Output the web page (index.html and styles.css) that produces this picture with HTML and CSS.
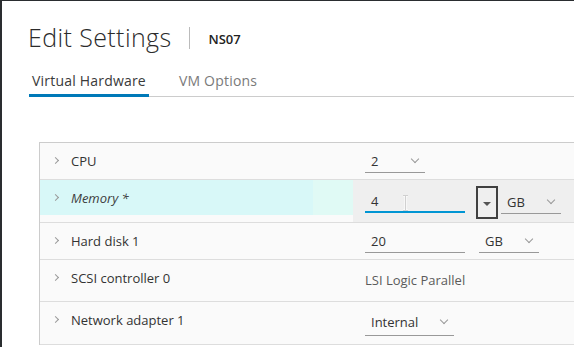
FILE: index.html
```html
<!DOCTYPE html>
<html lang="en">
  <head>
    <meta charset="UTF-8" />
    <meta name="viewport" content="width=device-width, initial-scale=1.0" />
    <title>Edit Settings</title>
    <link rel="stylesheet" href="styles.css">
  </head>
  <body>
    <div class="dialog">
      <div class="header">
        <h1 class="title">Edit Settings</h1>
        <div class="divider"></div>
        <div class="vm-name">NS07</div>
      </div>

      <div class="tabs">
        <div class="tab active">Virtual Hardware</div>
        <div class="tab">VM Options</div>
      </div>

      <div class="hardware">
        <div class="row short">
          <div class="label"><span class="caret"></span>CPU</div>
          <div class="value">
            <div class="select w60"><span>2</span><span class="chev"></span></div>
          </div>
        </div>

        <div class="row taller selected">
          <div class="label"><span class="caret"></span><em>Memory *</em></div>
          <div class="value">
            <div class="input focus w100">4</div>
            <div class="spin"><span class="tri"></span></div>
            <div class="select w60 unit"><span>GB</span><span class="chev"></span></div>
            <svg class="ibeam" width="7" height="16" viewBox="0 0 7 16">
              <path d="M1 0.5h5M3.5 0.5v15M1 15.5h5" stroke="#fff" stroke-width="2" fill="none" />
              <path d="M1 0.5h5M3.5 0.5v15M1 15.5h5" stroke="#d0d0d0" stroke-width="1" fill="none" />
            </svg>
          </div>
        </div>

        <div class="row short">
          <div class="label"><span class="caret"></span>Hard disk 1</div>
          <div class="value">
            <div class="input w100">20</div>
            <div class="select w60 unit-gap"><span>GB</span><span class="chev"></span></div>
          </div>
        </div>

        <div class="row tall">
          <div class="label"><span class="caret"></span>SCSI controller 0</div>
          <div class="value">
            <div class="plain">LSI Logic Parallel</div>
          </div>
        </div>

        <div class="row taller">
          <div class="label"><span class="caret"></span>Network adapter 1</div>
          <div class="value">
            <div class="select w89 low"><span>Internal</span><span class="chev"></span></div>
          </div>
        </div>
      </div>
    </div>
  </body>
</html>
```

FILE: styles.css
```css
body {
  margin: 0;
  background-color: #2a2d30;
  font-family: "Open Sans", sans-serif;
  color: #313131;
  overflow: hidden;
}
.dialog {
  margin: 1px 0 0 2px;
  height: 346px;
  background-color: #fff;
  overflow: hidden;
}

/* Header */
.header {
  display: flex;
  align-items: center;
  padding: 20px 0 0 26px;
  height: 32px;
}
.title {
  margin: 0;
  font-size: 25px;
  font-weight: 300;
  letter-spacing: 0.4px;
  color: #2b2b2b;
}
.divider {
  width: 1px;
  height: 22px;
  margin: 2px 19px 0 17px;
  background-color: #bbb;
}
.vm-name {
  font-size: 13px;
  font-weight: 600;
  margin-top: 3px;
  color: #222;
}

/* Tabs */
.tabs {
  display: flex;
  gap: 27px;
  margin: 18px 0 0 27px;
  border-bottom: 1px solid #ccc;
}
.tab {
  font-size: 14px;
  letter-spacing: 0.2px;
  padding: 0 3px 4px 3px;
  color: #7a7a7a;
  border-bottom: 3px solid transparent;
  margin-bottom: -1px;
}
.tab.active {
  color: #3a3a3a;
  border-bottom-color: #0079b8;
}

/* Hardware rows */
.hardware {
  margin: 45px 0 0 37px;
  border-top: 1px solid #ccc;
  border-left: 1px solid #ccc;
}
.row {
  display: grid;
  grid-template-columns: 313px 1fr;
  background-color: #fafafa;
  border-bottom: 1px solid #ddd;
  font-size: 13px;
}
.row.short {
  height: 36px;
}
.row.tall {
  height: 41px;
}
.row.taller {
  height: 42px;
}
.row.selected .label {
  background: linear-gradient(90deg, #d8f8f8 0, #d8f8f8 273px, #e0faf5 273px);
}
.row.selected .value {
  background-color: #efefef;
}
.label {
  display: flex;
  align-items: center;
  height: 35px;
  padding-left: 13px;
  color: #333;
}
.label em {
  color: #3d3d3d;
}
.caret {
  width: 4px;
  height: 4px;
  margin: 0 13px 0 0;
  border-top: 1px solid #999;
  border-right: 1px solid #999;
  transform: rotate(45deg);
}
.value {
  position: relative;
  display: flex;
  align-items: flex-start;
  padding: 6px 0 0 12px;
}

/* Form controls */
.select,
.input {
  display: flex;
  align-items: center;
  justify-content: space-between;
  box-sizing: border-box;
  height: 24px;
  padding: 0 7px 0 6px;
  border-bottom: 1px solid #999;
  color: #333;
}
.w60 {
  width: 60px;
}
.w89 {
  width: 89px;
}
.w100 {
  width: 100px;
}
.select.low {
  height: 27px;
  margin-top: 1px;
}
.input.focus {
  height: 23px;
  border-bottom: 2px solid #0095d3;
  margin-top: 4px;
}
.chev {
  width: 5px;
  height: 5px;
  margin: -4px 0 0 0;
  border-bottom: 1px solid #999;
  border-right: 1px solid #999;
  transform: rotate(45deg);
}
.spin {
  display: flex;
  align-items: center;
  justify-content: center;
  box-sizing: border-box;
  width: 22px;
  height: 33px;
  margin: 0 3px 0 11px;
  border: 2px solid #404040;
}
.tri {
  margin-top: 3px;
  border-left: 4px solid transparent;
  border-right: 4px solid transparent;
  border-top: 4px solid #555;
}
.select.unit {
  margin-top: 4px;
}
.unit-gap {
  margin-left: 14px;
}
.plain {
  padding-top: 5px;
  color: #5a5a5a;
}
.ibeam {
  position: absolute;
  left: 49px;
  top: 15px;
}
```
